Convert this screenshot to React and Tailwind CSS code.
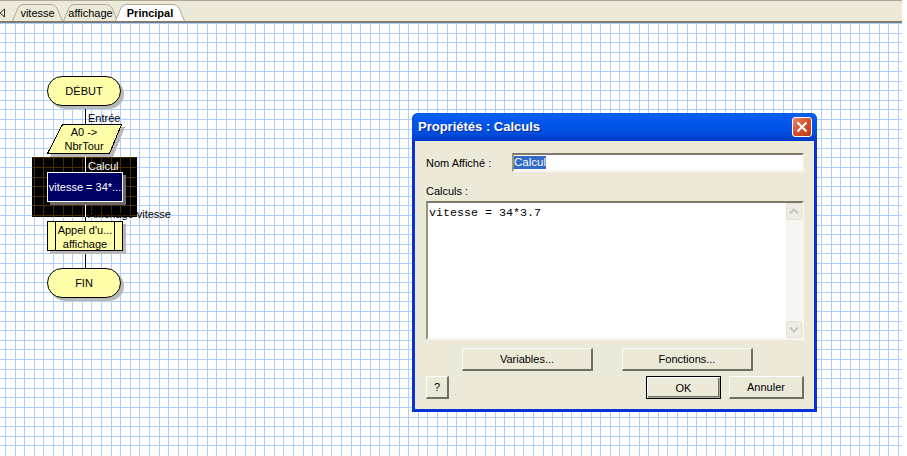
import React from "react";

const FONT = "font-['Liberation_Sans',Arial,sans-serif] text-[11px] leading-[14px] text-black whitespace-nowrap";

const xLines = Array.from({ length: 94 }, (_, i) => Math.round(5 + i * 9.6));
const yLines = Array.from({ length: 45 }, (_, i) => Math.round(i * 9.6));

// paper grid + the inverted block behind the selected node
function Paper() {
  return (
    <svg className="absolute inset-0" width="902" height="433" shapeRendering="crispEdges">
      {xLines.map((x) => (
        <rect key={x} x={x} y="0" width="1" height="433" fill="#aecfff" />
      ))}
      {yLines.map((y) => (
        <rect key={y} x="0" y={y} width="902" height="1" fill="#aecfff" />
      ))}
      <rect x="32" y="134" width="105" height="60" fill="#000" />
      {xLines
        .filter((x) => x >= 32 && x < 137)
        .map((x) => (
          <rect key={x} x={x} y="134" width="1" height="60" fill="#4b2d00" />
        ))}
      {yLines
        .filter((y) => y >= 134 && y < 194)
        .map((y) => (
          <rect key={y} x="32" y={y} width="105" height="1" fill="#4b2d00" />
        ))}
      <rect x="85" y="83" width="1" height="18" fill="#000" />
      <rect x="85" y="131" width="1" height="3" fill="#000" />
      <rect x="85" y="134" width="1" height="15" fill="#fff" />
      <rect x="85" y="179" width="1" height="15" fill="#fff" />
      <rect x="85" y="194" width="1" height="4" fill="#000" />
      <rect x="85" y="227" width="1" height="18" fill="#000" />
      <polygon points="65,104 125,104 113,134 50,134" fill="#b8b8b8" />
      <polygon points="62.5,101.5 121.5,101.5 109.5,130.5 47.5,130.5" fill="#ffffaa" stroke="#000" />
    </svg>
  );
}

function Terminal({ className, children }) {
  return (
    <div
      className={`absolute flex h-[30px] w-[74px] items-center justify-center rounded-[15px] border border-black bg-[#ffffaa] shadow-[3px_3px_0_#b8b8b8] ${FONT} ${className}`}
    >
      {children}
    </div>
  );
}

function Tab({ width, active, className, children }) {
  const w = width;
  return (
    <div className={`relative flex h-[17px] items-center justify-center ${className}`} style={{ width: w }}>
      <svg className="absolute inset-0" width={w} height="17">
        <path
          d={`M0.5 17 L6 4 Q7.5 0.5 11 0.5 L${w - 12} 0.5 Q${w - 8} 0.5 ${w - 6} 4 L${w - 0.5} 17`}
          fill={active ? "#fff" : "#ece9d8"}
          stroke="#aca899"
        />
      </svg>
      <span className={`relative ${FONT} ${active ? "font-bold" : ""}`}>{children}</span>
    </div>
  );
}

function Btn({ className, isDefault, children }) {
  const edge = isDefault
    ? "border border-black shadow-[inset_1px_1px_0_#fff,inset_-1px_-1px_0_#aca899,inset_-2px_-2px_0_#716f64]"
    : "border-t border-l border-r-2 border-b-2 border-t-white border-l-white border-r-[#716f64] border-b-[#716f64]";
  return (
    <button className={`flex h-[23px] items-center justify-center bg-[#ece9d8] ${edge} ${FONT} ${className}`}>
      {children}
    </button>
  );
}

function ScrollBtn({ down }) {
  return (
    <div className="flex h-[17px] items-center justify-center rounded-[2px] border border-[#e4e1d4] bg-[#eeede5]">
      <svg width="10" height="7" viewBox="0 0 10 7">
        <path
          d={down ? "M1 1.5 L5 5.5 L9 1.5" : "M1 5.5 L5 1.5 L9 5.5"}
          fill="none"
          stroke="#c9c7ba"
          strokeWidth="2"
        />
      </svg>
    </div>
  );
}

const SUNKEN = "border-2 border-t-[#7d7a6b] border-l-[#96937f] border-r-[#f6f5ee] border-b-[#f6f5ee] bg-white";

function Dialog() {
  return (
    <div className="absolute left-[412px] top-[90px] flex h-[299px] w-[405px] flex-col rounded-t-[6px] bg-[#0831d9]">
      <div className="flex h-[28px] items-center justify-between rounded-t-[6px] bg-[linear-gradient(180deg,#0a5fe6_0%,#0458ee_20%,#0050e0_70%,#0038c4_100%)] pl-[6px] pr-[5px]">
        <span className="font-['Liberation_Sans',Arial,sans-serif] text-[13px] font-bold text-white [text-shadow:1px_1px_0_#0a2a9a]">
          Propriétés : Calculs
        </span>
        <div className="flex h-[20px] w-[20px] items-center justify-center rounded-[3px] border border-white bg-[linear-gradient(135deg,#e98a6a,#d4502c_50%,#bd3a14)]">
          <svg width="12" height="12" viewBox="0 0 12 12">
            <path d="M1.5 1.5 L10.5 10.5 M10.5 1.5 L1.5 10.5" stroke="#fff" strokeWidth="2.2" />
          </svg>
        </div>
      </div>
      <div className="mx-[3px] mb-[3px] flex-1 bg-[#ece9d8] pl-[11px] pr-[10px] pt-[12px]">
        <div className="flex h-[19px] items-center justify-between">
          <span className={FONT}>Nom Affiché :</span>
          <div className={`flex h-[19px] w-[292px] items-center ${SUNKEN}`}>
            <span className="bg-[#316ac5] font-['Liberation_Sans',Arial,sans-serif] text-[11.5px] leading-[13px] text-white">
              Calcul
            </span>
          </div>
        </div>
        <div className={`mt-[12px] h-[17px] ${FONT}`}>Calculs :</div>
        <div className={`flex h-[139px] ${SUNKEN}`}>
          <div className="flex-1 pl-px pt-[2px] font-['Liberation_Mono','Courier_New',monospace] text-[11.67px] leading-[16px] text-black">
            vitesse = 34*3.7
          </div>
          <div className="flex w-[16px] flex-col bg-[#f7f6f0]">
            <ScrollBtn />
            <div className="flex-1" />
            <ScrollBtn down />
          </div>
        </div>
        <div className="mt-[8px] flex gap-[29px] pl-[36px]">
          <Btn className="w-[131px]">Variables...</Btn>
          <Btn className="w-[131px]">Fonctions...</Btn>
        </div>
        <div className="mt-[5px] flex gap-[8px]">
          <Btn className="mr-auto w-[23px]">?</Btn>
          <Btn isDefault className="w-[75px]">
            OK
          </Btn>
          <Btn className="w-[75px]">Annuler</Btn>
        </div>
      </div>
    </div>
  );
}

export default function App() {
  return (
    <div className="h-[456px] w-[907px] overflow-hidden bg-white">
      <div className="w-[902px]">
        <div className="flex h-[23px] items-end border-t border-t-[#aca899] border-b-2 border-b-[#807d70] bg-[#ece9d8]">
          <svg className="mb-[3px]" width="12" height="10" viewBox="0 0 12 10">
            <path d="M4.5 1 L0 5 L4.5 9 Z" fill="#ece9d8" stroke="#333" />
          </svg>
          <Tab width={51}>vitesse</Tab>
          <Tab width={55}>affichage</Tab>
          <Tab width={70} active className="ml-[-3px]">
            Principal
          </Tab>
        </div>

        <div className="relative h-[433px] overflow-hidden bg-white">
          <Paper />

          <Terminal className="left-[47px] top-[53px]">DÉBUT</Terminal>
          <span className={`absolute left-[88px] top-[88px] ${FONT}`}>Entrée</span>

          <div className={`absolute left-[52px] top-[102px] w-[64px] text-center ${FONT}`}>
            A0 -&gt;
            <br />
            NbrTour
          </div>

          <span className={`absolute left-[88px] top-[136px] ${FONT} text-white`}>Calcul</span>
          <div
            className={`absolute left-[47px] top-[149px] flex h-[30px] w-[76px] items-center justify-center border border-white bg-[#000064] shadow-[3px_3px_0_#6b6b6b] ${FONT} text-white`}
          >
            vitesse = 34*...
          </div>
          <span className={`absolute left-[88px] top-[184px] ${FONT}`}>Affichage vitesse</span>

          <div
            className={`absolute left-[47px] top-[198px] flex h-[30px] w-[76px] border border-black bg-[#ffffaa] shadow-[3px_3px_0_#b8b8b8] ${FONT}`}
          >
            <div className="w-[8px] border-r border-black" />
            <div className="flex-1 pt-px text-center">
              Appel d'u...
              <br />
              affichage
            </div>
            <div className="w-[8px] border-l border-black" />
          </div>

          <Terminal className="left-[47px] top-[245px]">FIN</Terminal>

          <Dialog />
        </div>
      </div>
    </div>
  );
}
